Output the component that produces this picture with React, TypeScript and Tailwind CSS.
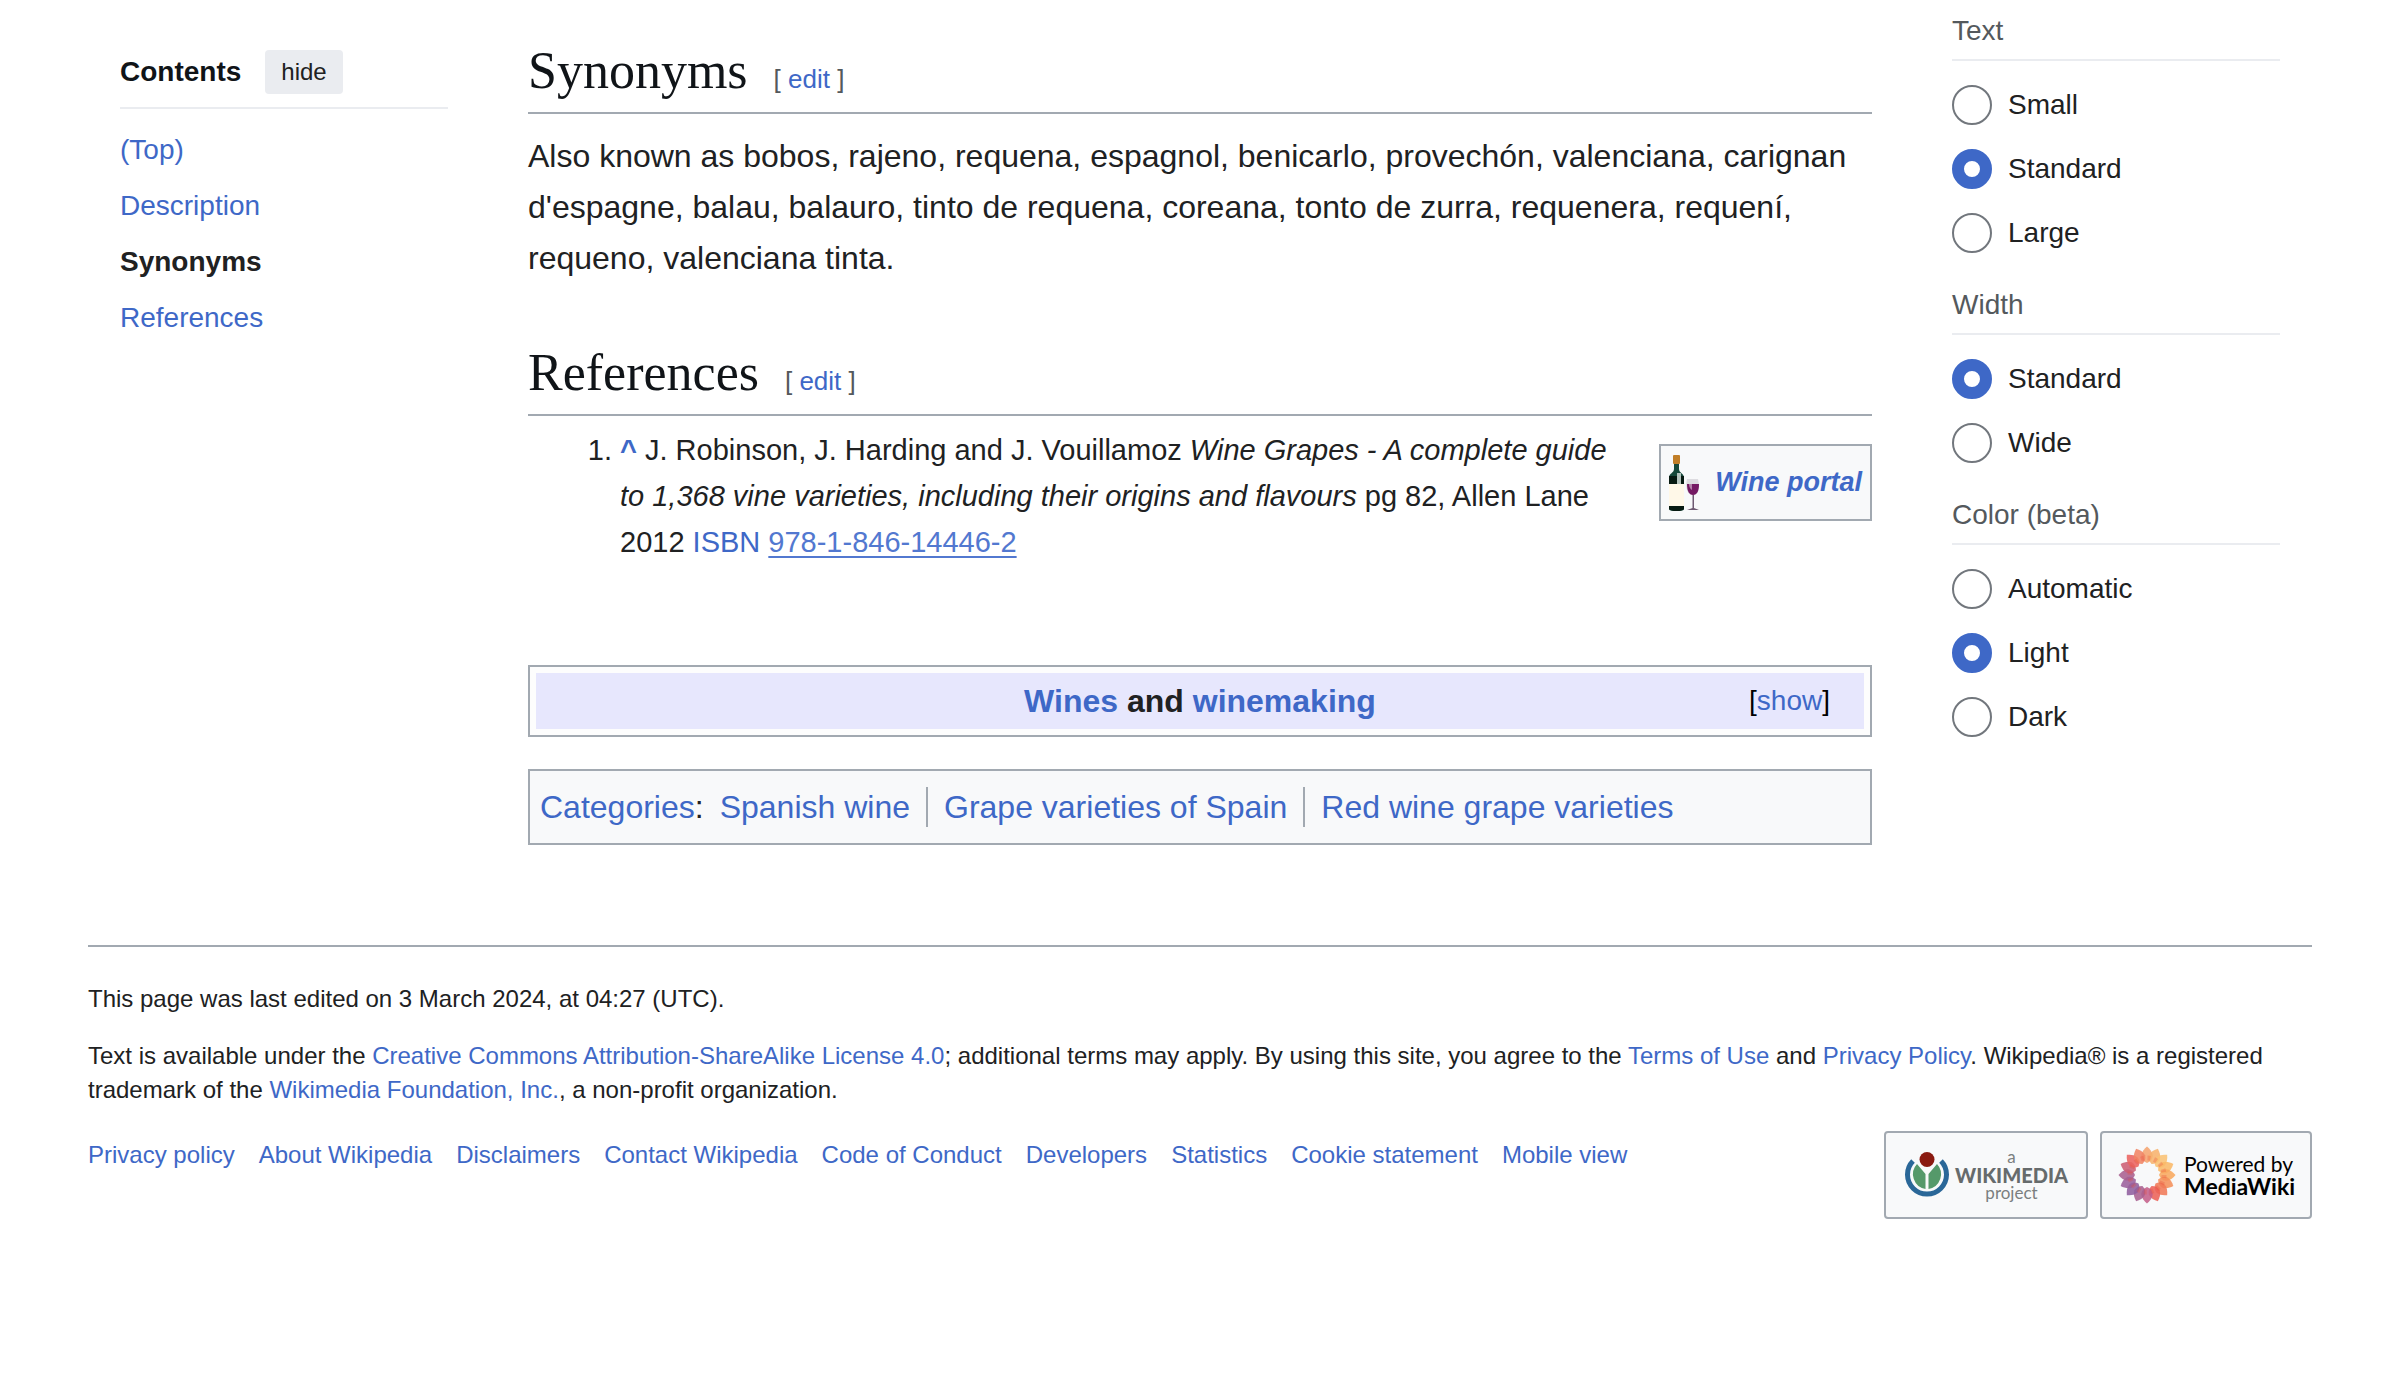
import React from "react";

const tocItems = [
  { label: "(Top)", active: false },
  { label: "Description", active: false },
  { label: "Synonyms", active: true },
  { label: "References", active: false },
];

const settings = [
  { name: "text", title: "Text", options: ["Small", "Standard", "Large"], selected: "Standard" },
  { name: "width", title: "Width", options: ["Standard", "Wide"], selected: "Standard" },
  { name: "color", title: "Color (beta)", options: ["Automatic", "Light", "Dark"], selected: "Light" },
];

const categories = ["Spanish wine", "Grape varieties of Spain", "Red wine grape varieties"];

const footerLinks = [
  "Privacy policy",
  "About Wikipedia",
  "Disclaimers",
  "Contact Wikipedia",
  "Code of Conduct",
  "Developers",
  "Statistics",
  "Cookie statement",
  "Mobile view",
];

function Link({ children, className = "" }: { children: React.ReactNode; className?: string }) {
  return (
    <a href="#" className={"text-[#3e68c7] hover:underline " + className}>
      {children}
    </a>
  );
}

function SectionHeading({ title }: { title: string }) {
  return (
    <div className="flex items-baseline gap-[26px] border-b-2 border-[#a2a9b1] pb-2">
      <h2 className="font-['Liberation_Serif',serif] text-[52px] leading-[66px] text-[#101418]">{title}</h2>
      <span className="text-[26px] leading-8 text-[#54595d]">
        [ <Link>edit</Link> ]
      </span>
    </div>
  );
}

function TableOfContents() {
  return (
    <nav aria-label="Contents" className="w-[328px] shrink-0 pt-[50px]">
      <div className="flex items-center gap-6 border-b-2 border-[#eaecf0] pb-[13px]">
        <h2 className="text-[28px] font-bold leading-[44px] text-[#101418]">Contents</h2>
        <button type="button" className="h-11 rounded-[4px] bg-[#eaecf0] px-4 text-2xl text-[#202122]">
          hide
        </button>
      </div>
      <ul className="mt-[13px] text-[28px] leading-[56px]">
        {tocItems.map((item) => (
          <li key={item.label}>
            {item.active ? (
              <a href="#" aria-current="true" className="font-bold text-[#202122]">
                {item.label}
              </a>
            ) : (
              <Link>{item.label}</Link>
            )}
          </li>
        ))}
      </ul>
    </nav>
  );
}

function Appearance() {
  return (
    <aside aria-label="Appearance" className="flex w-[328px] shrink-0 flex-col gap-7 pt-[7px] text-[28px]">
      {settings.map((group) => (
        <fieldset key={group.name}>
          <legend className="w-full border-b-2 border-[#eaecf0] pb-1 leading-[48px] text-[#54595d]">{group.title}</legend>
          <div className="flex flex-col gap-6 pt-6">
            {group.options.map((option) => (
              <label key={option} className="flex items-center gap-4 leading-10 text-[#202122]">
                <input
                  type="radio"
                  name={group.name}
                  defaultChecked={option === group.selected}
                  className="size-10 appearance-none rounded-full border-2 border-[#72777d] bg-white checked:border-[12px] checked:border-[#3e68c7]"
                />
                {option}
              </label>
            ))}
          </div>
        </fieldset>
      ))}
    </aside>
  );
}

function WineIcon() {
  return (
    <svg width="32" height="56" viewBox="0 0 32 56" aria-hidden="true">
      <path d="M5 8h5v6c0 4 5 4 5 9v31q0 2-7.500 2T0 54V23c0-5 5-5 5-9z" fill="#15483a" />
      <path d="M0 21h15v9H0z" fill="#071a12" />
      <path d="M8 18h4v12H8z" fill="#b4c4be" />
      <rect x="4" y="0" width="7" height="9" rx="1" fill="#c17e28" />
      <rect x="0" y="29" width="15" height="22" fill="#fff8e8" />
      <path d="M0 51h15v3q-2 2-7.500 2T0 54z" fill="#071a12" />
      <path d="M18 24h11c2 8 1 16-5 16s-8-8-6-16z" fill="#dddce0" />
      <path d="M18 29h12c0 7-2 11-6 11s-6-4-6-11z" fill="#751a63" />
      <path d="M20 29h3v6q-3-2-3-6z" fill="#fff" opacity=".45" />
      <path d="M23.500 40h1.500v13l5 2H18l5.500-2z" fill="#6f5a72" />
    </svg>
  );
}

function WikimediaMark() {
  return (
    <svg width="44" height="46" viewBox="0 0 44 46" aria-hidden="true">
      <path d="M8 9A19.500 19.500 0 1 0 36 9" fill="none" stroke="#2a6798" strokeWidth="5" />
      <path d="M12 12a15 15 0 0 0 8.500 25V22z" fill="#55996a" />
      <path d="M32 12a15 15 0 0 1-8.500 25V22z" fill="#55996a" />
      <circle cx="22" cy="7.500" r="7.500" fill="#8a1a10" />
    </svg>
  );
}

const petalColors = [
  "#f5a470", "#f7b26c", "#f9c274", "#f9b868", "#f8a85e", "#f4905a", "#f07a58", "#ec6258",
  "#c4608a", "#a8608f", "#8f5f9e", "#9a609c", "#a8608f", "#cc5f74", "#ea6460", "#f08464",
];

function Sunflower() {
  return (
    <svg width="58" height="58" viewBox="-29 -29 58 58" aria-hidden="true">
      {petalColors.map((color, i) => (
        <path
          key={i}
          d="M0-28.500C3-26 5.500-23 5.800-19Q5-14 0-12Q-5-14-5.800-19C-5.500-23-3-26 0-28.500z"
          fill={color}
          fillOpacity=".88"
          transform={`rotate(${i * 22.5})`}
        />
      ))}
      <circle r="17" fill="none" stroke="#e8503a" strokeOpacity=".3" strokeWidth="5" strokeDasharray="3 3.676" />
    </svg>
  );
}

function Article() {
  return (
    <main className="min-w-0 flex-1 pt-[38px]">
      <SectionHeading title="Synonyms" />
      <p className="mt-[17px] text-[32px] leading-[51px]">
        Also known as bobos, rajeno, requena, espagnol, benicarlo, provechón, valenciana, carignan d'espagne, balau,
        balauro, tinto de requena, coreana, tonto de zurra, requenera, requení, requeno, valenciana tinta.
      </p>
      <div className="mt-14">
        <SectionHeading title="References" />
      </div>
      <div className="flex items-start justify-between gap-12 pt-[11px]">
        <ol className="list-decimal pl-[92px] text-[29px] leading-[46px]">
          <li>
            <Link className="font-bold">^</Link> J. Robinson, J. Harding and J. Vouillamoz{" "}
            <i>Wine Grapes - A complete guide to 1,368 vine varieties, including their origins and flavours</i> pg 82,
            Allen Lane 2012 <Link>ISBN</Link>{" "}
            <a href="#" className="text-[#5278d0] underline decoration-2 underline-offset-4">
              978-1-846-14446-2
            </a>
          </li>
        </ol>
        <div className="mt-[17px] flex h-[77px] shrink-0 items-center gap-3.5 border-2 border-[#a2a9b1] bg-[#f8f9fa] px-2">
          <WineIcon />
          <Link className="whitespace-nowrap text-[27px] font-bold italic">Wine portal</Link>
        </div>
      </div>
      <div className="mt-[100px] border-2 border-[#a2a9b1] bg-[#fdfdfd] p-1.5">
        <div className="grid grid-cols-[1fr_auto_1fr] items-center bg-[#e7e7fd] leading-[56px]">
          <span />
          <h3 className="text-[32px] font-bold">
            <Link>Wines</Link> and <Link>winemaking</Link>
          </h3>
          <span className="justify-self-end pr-[34px] text-[28px] text-black">
            [
            <button type="button" className="text-[#3e68c7]">
              show
            </button>
            ]
          </span>
        </div>
      </div>
      <div className="mt-8 flex items-center border-2 border-[#a2a9b1] bg-[#f8f9fa] px-2.5 py-4 text-[32px] leading-10">
        <span>
          <Link>Categories</Link>:
        </span>
        <ul className="flex">
          {categories.map((category) => (
            <li key={category} className="border-l-2 border-[#a2a9b1] px-4 first:border-l-0">
              <Link>{category}</Link>
            </li>
          ))}
        </ul>
      </div>
    </main>
  );
}

function Footer() {
  return (
    <footer className="mx-[88px] border-t-2 border-[#a2a9b1] pt-[35px] text-2xl leading-[34px]">
      <p>This page was last edited on 3 March 2024, at 04:27 (UTC).</p>
      <p className="mt-[23px]">
        Text is available under the <Link>Creative Commons Attribution-ShareAlike License 4.0</Link>; additional terms
        may apply. By using this site, you agree to the <Link>Terms of Use</Link> and <Link>Privacy Policy</Link>.
        Wikipedia® is a registered trademark of the <Link>Wikimedia Foundation, Inc.</Link>, a non-profit organization.
      </p>
      <div className="mt-6 flex items-start justify-between">
        <ul className="flex gap-6 pt-[7px]">
          {footerLinks.map((label) => (
            <li key={label}>
              <Link>{label}</Link>
            </li>
          ))}
        </ul>
        <div className="flex gap-3">
          <a
            href="#"
            className="flex h-[88px] w-[204px] items-center gap-1.5 rounded-[4px] border-2 border-[#a2a9b1] bg-[#f8f9fa] pl-[19px]"
          >
            <WikimediaMark />
            <span className="text-center font-[Lato,sans-serif] text-[17px] leading-[18px] text-[#7b7f80]">
              <span className="block">a</span>
              <b className="block text-[20px] font-black text-[#666b6c]">WIKIMEDIA</b>
              <span className="block">project</span>
            </span>
          </a>
          <a
            href="#"
            className="flex h-[88px] w-[212px] items-center gap-2 rounded-[4px] border-2 border-[#a2a9b1] bg-[#f8f9fa] pl-4 text-black"
          >
            <Sunflower />
            <span className="font-[Lato,sans-serif] text-[21px] leading-[22px]">
              <span className="block">Powered by</span>
              <b className="block text-[23px]">MediaWiki</b>
            </span>
          </a>
        </div>
      </div>
    </footer>
  );
}

export default function App() {
  return (
    <div className="min-h-screen bg-white font-['Liberation_Sans',Arial,sans-serif] text-[#202122]">
      <div className="flex gap-20 px-[120px] pb-[100px]">
        <TableOfContents />
        <Article />
        <Appearance />
      </div>
      <Footer />
    </div>
  );
}
